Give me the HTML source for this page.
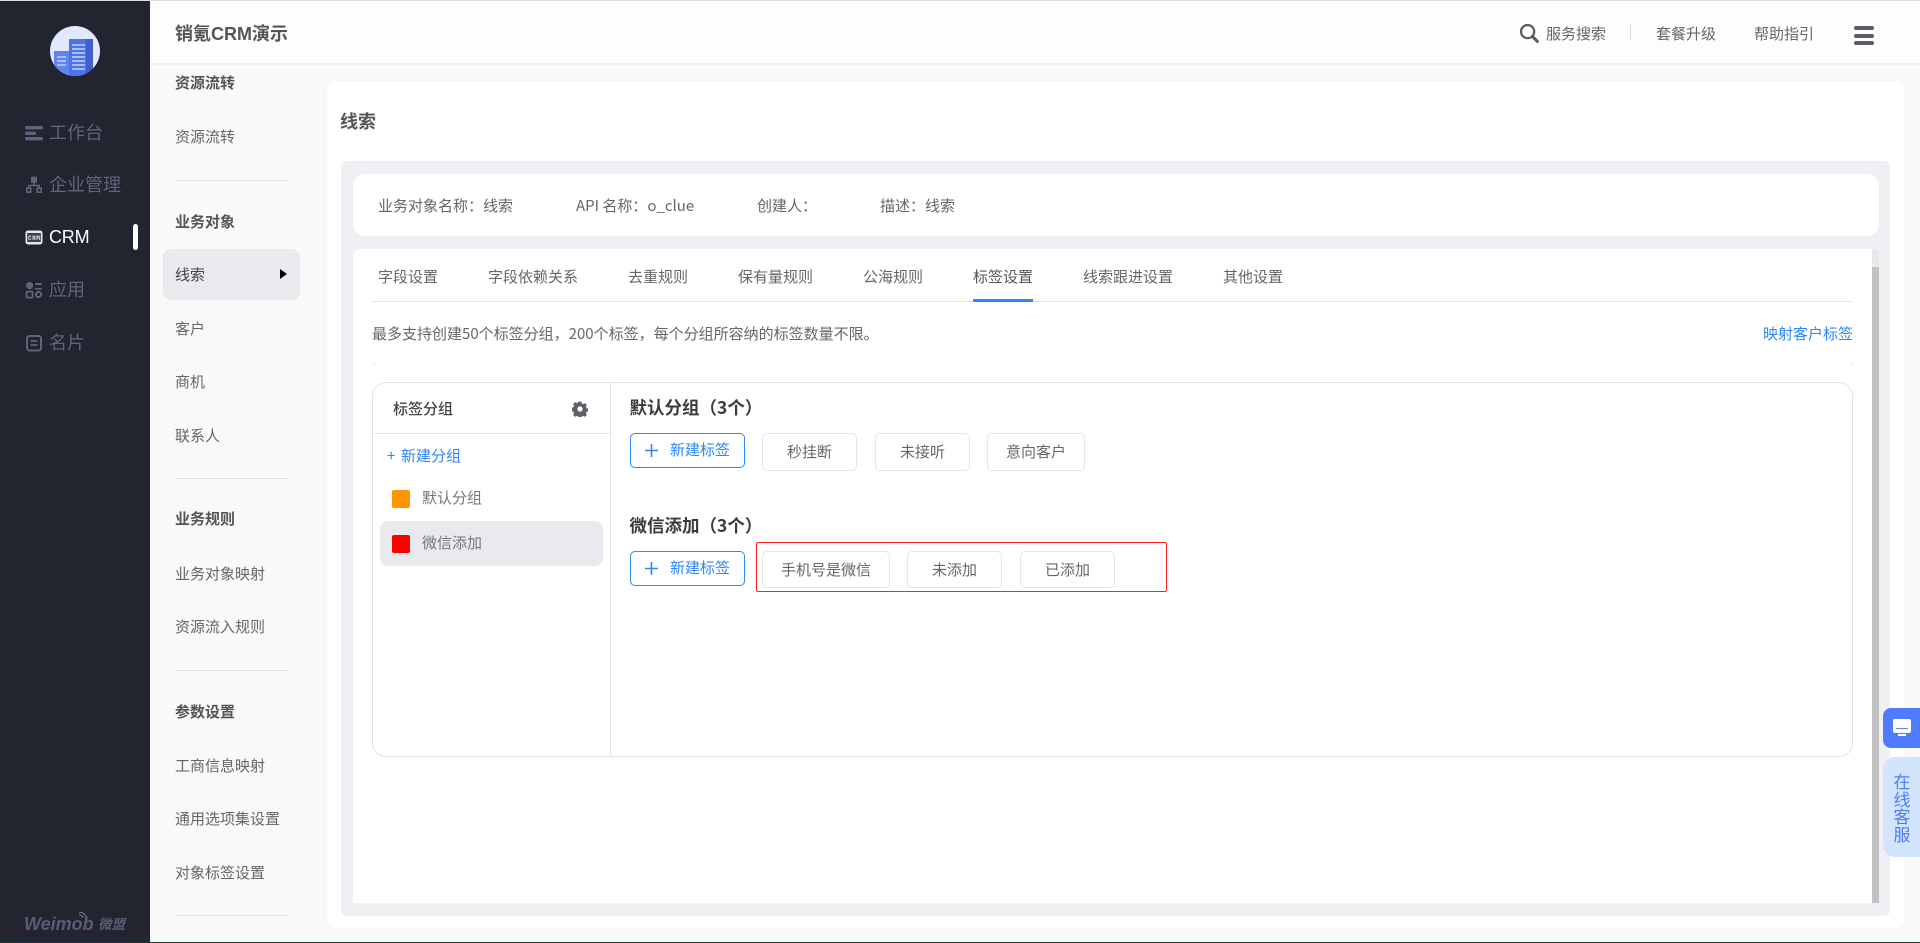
<!DOCTYPE html>
<html lang="zh-CN">
<head>
<meta charset="utf-8">
<title>销氪CRM演示</title>
<style>
html,body{margin:0;padding:0;width:1920px;height:943px;overflow:hidden;background:#f9f9fa}
body{position:relative;font-family:"Noto Sans CJK SC","Liberation Sans",sans-serif;font-size:15px;color:#666}
div,span,svg{position:absolute;box-sizing:border-box}
.t{white-space:nowrap;line-height:20px;height:20px}
.nav{font-size:18px;line-height:24px;height:24px;color:#61637b;left:49px;white-space:nowrap}
.b{font-weight:700;color:#555}
.hr{left:175px;width:113px;height:1px;background:#e3e3e5}
.h{font-size:17.5px;font-weight:700;color:#3a3a3f;left:629.5px;white-space:nowrap;line-height:24px;height:24px}
.btn{left:630px;width:115px;height:35px;border:1px solid #2d87f5;border-radius:5px;background:#fff}
.btn span{left:39px;top:6px;line-height:20px;color:#2d87f5;white-space:nowrap}
.tag{border:1px solid #e6e6e6;border-radius:5px;background:#fff;text-align:center;line-height:35px;color:#666;white-space:nowrap}
</style>
</head>
<body>
<div style="left:0;top:0;width:1920px;height:1px;background:#dcdce2"></div>
<div style="left:0;top:942px;width:1920px;height:1px;background:#23363d"></div>

<!-- dark sidebar -->
<div style="left:0;top:1px;width:150px;height:941px;background:#22242f"></div>
<svg style="left:50px;top:26px" width="50" height="50" viewBox="0 0 50 50">
<defs><clipPath id="c"><circle cx="25" cy="25" r="25"/></clipPath></defs>
<g clip-path="url(#c)">
<rect width="50" height="50" fill="#e0e7fe"/>
<rect x="19" y="13" width="24" height="37" fill="#4e72ea"/>
<rect x="36" y="13" width="7" height="37" fill="#3f5fd0"/>
<rect x="4" y="25" width="15" height="25" fill="#5f84f2"/>
<g fill="#a9bdf8">
<rect x="22" y="18" width="13" height="2"/><rect x="22" y="22" width="13" height="2"/><rect x="22" y="26" width="13" height="2"/><rect x="22" y="30" width="13" height="2"/><rect x="22" y="34" width="13" height="2"/><rect x="22" y="38" width="13" height="2"/><rect x="22" y="42" width="13" height="2"/>
<rect x="7" y="30" width="9" height="2"/><rect x="7" y="34" width="9" height="2"/><rect x="7" y="38" width="9" height="2"/>
</g>
</g>
</svg>

<svg style="left:25px;top:125px" width="18" height="16" viewBox="0 0 18 16" fill="#61637b">
<rect x="0" y="1" width="18" height="3.4" rx="1.5"/><rect x="0" y="6.6" width="11" height="3.4" rx="1.5"/><rect x="0" y="12" width="18" height="3.4" rx="1.5"/>
</svg>
<div class="nav" style="top:120px">工作台</div>

<svg style="left:25px;top:176px" width="18" height="18" viewBox="0 0 18 18" fill="none" stroke="#61637b" stroke-width="1.6">
<rect x="6.8" y="1.5" width="4.4" height="4.4" fill="#61637b"/>
<path d="M9 6v3.5M3.8 12V9.5h10.4V12"/>
<rect x="1.8" y="12.2" width="4" height="4"/><rect x="12.2" y="12.2" width="4" height="4"/>
</svg>
<div class="nav" style="top:172px">企业管理</div>

<svg style="left:25px;top:230px" width="18" height="15" viewBox="0 0 18 15">
<rect x="0.5" y="0.5" width="17" height="14" rx="2.5" fill="#e6e6ea"/>
<rect x="2.2" y="3" width="13.6" height="9" fill="#3c3e4a"/>
<text x="9" y="10.2" font-size="6.2" font-family="Liberation Mono,monospace" font-weight="700" text-anchor="middle" fill="#e6e6ea" textLength="12">CRM</text>
</svg>
<div class="nav" style="top:225px;color:#fff;font-family:'Liberation Sans',sans-serif;letter-spacing:-.2px">CRM</div>
<div style="left:133px;top:224px;width:5px;height:26px;background:#fff;border-radius:3px"></div>

<svg style="left:25px;top:281px" width="18" height="18" viewBox="0 0 18 18" fill="#61637b">
<circle cx="4.6" cy="4.6" r="3.6"/><rect x="10" y="2" width="7" height="2" rx="1"/>
<rect x="1.6" y="10.6" width="6" height="6" rx="1" fill="none" stroke="#61637b" stroke-width="1.8"/>
<circle cx="13.5" cy="13.5" r="2.6" fill="none" stroke="#61637b" stroke-width="2"/>
<rect x="10" y="7" width="7" height="1.6" rx=".8"/>
</svg>
<div class="nav" style="top:277px">应用</div>

<svg style="left:25px;top:334px" width="18" height="18" viewBox="0 0 18 18" fill="none" stroke="#61637b" stroke-width="2">
<rect x="2" y="2" width="14" height="14.5" rx="2.5"/><path d="M5.5 7h7M5.5 11h7" stroke-width="1.7"/>
</svg>
<div class="nav" style="top:330px">名片</div>

<div style="left:24px;top:912px;width:105px;height:24px;color:#5a5c75;font-family:'Liberation Sans',sans-serif;font-style:italic;font-weight:700;font-size:18px;line-height:24px;white-space:nowrap">Weimob</div>
<div style="left:98px;top:913px;font-size:13.5px;font-weight:700;font-style:italic;color:#5a5c75;line-height:20px;white-space:nowrap">微盟</div>
<svg style="left:78px;top:909px" width="10" height="10" viewBox="0 0 10 10" fill="none" stroke="#6a6c85" stroke-width="1.2">
<path d="M1 3.5a6 6 0 0 1 7 5M1 6a3.5 3.5 0 0 1 4 3"/>
</svg>

<!-- header -->
<div style="left:150px;top:1px;width:1770px;height:64px;background:#fdfdfd;border-bottom:2px solid #f1f1f3"></div>
<div class="t b" style="left:175px;top:22px;font-size:18px;line-height:22px;height:22px">销氪<span style="position:static;font-family:'Liberation Sans',sans-serif">CRM</span>演示</div>
<svg style="left:1519px;top:23px" width="20" height="20" viewBox="0 0 20 20" fill="none" stroke="#555a63" stroke-width="2.2">
<circle cx="8.6" cy="8.6" r="6.6"/><path d="M13.4 13.4L18.4 18.4" stroke-width="3" stroke-linecap="round"/>
</svg>
<div class="t" style="left:1546px;top:24px">服务搜索</div>
<div style="left:1630px;top:24px;width:1px;height:17px;background:#ddd"></div>
<div class="t" style="left:1656px;top:24px">套餐升级</div>
<div class="t" style="left:1754px;top:24px">帮助指引</div>
<div style="left:1854px;top:26px;width:20px;height:4px;border-radius:2px;background:#5c5c66"></div>
<div style="left:1854px;top:34px;width:20px;height:4px;border-radius:2px;background:#5c5c66"></div>
<div style="left:1854px;top:41px;width:20px;height:4px;border-radius:2px;background:#5c5c66"></div>

<!-- secondary nav -->
<div class="t b" style="left:175px;top:73px">资源流转</div>
<div class="t" style="left:175px;top:127px">资源流转</div>
<div class="hr" style="top:180px"></div>
<div class="t b" style="left:175px;top:212px">业务对象</div>
<div style="left:163px;top:249px;width:137px;height:51px;background:#e9e9ee;border-radius:8px"></div>
<div class="t" style="left:175px;top:265px;color:#444">线索</div>
<svg style="left:280px;top:269px" width="7" height="10" viewBox="0 0 7 10"><path d="M0 0L7 5L0 10Z" fill="#000"/></svg>
<div class="t" style="left:175px;top:319px">客户</div>
<div class="t" style="left:175px;top:372px">商机</div>
<div class="t" style="left:175px;top:426px">联系人</div>
<div class="hr" style="top:478px"></div>
<div class="t b" style="left:175px;top:509px">业务规则</div>
<div class="t" style="left:175px;top:564px">业务对象映射</div>
<div class="t" style="left:175px;top:617px">资源流入规则</div>
<div class="hr" style="top:670px"></div>
<div class="t b" style="left:175px;top:702px">参数设置</div>
<div class="t" style="left:175px;top:756px">工商信息映射</div>
<div class="t" style="left:175px;top:809px">通用选项集设置</div>
<div class="t" style="left:175px;top:863px">对象标签设置</div>
<div class="hr" style="top:915px"></div>

<!-- main card -->
<div style="left:327px;top:81px;width:1577px;height:847px;background:#fff;border-radius:8px;box-shadow:0 0 2px rgba(0,0,0,.03)"></div>
<div class="t b" style="left:340px;top:109px;font-size:18px;line-height:24px;height:24px">线索</div>
<div style="left:341px;top:161px;width:1549px;height:755px;background:#f0f0f4;border-radius:6px"></div>

<div style="left:353px;top:174px;width:1526px;height:62px;background:#fff;border-radius:12px"></div>
<div class="t" style="left:378px;top:196px">业务对象名称：线索</div>
<div class="t" style="left:576px;top:196px">API 名称：o_clue</div>
<div class="t" style="left:757px;top:196px">创建人：</div>
<div class="t" style="left:880px;top:196px">描述：线索</div>

<div style="left:353px;top:249px;width:1526px;height:654px;background:#fff;border-radius:6px 6px 0 0"></div>
<div style="left:1872px;top:249px;width:7px;height:18px;background:#e8e8e8;border-radius:0 5px 0 0"></div>
<div style="left:1872px;top:267px;width:7px;height:636px;background:#c2c2c2"></div>

<div class="t" style="left:378px;top:267px">字段设置</div>
<div class="t" style="left:488px;top:267px">字段依赖关系</div>
<div class="t" style="left:628px;top:267px">去重规则</div>
<div class="t" style="left:738px;top:267px">保有量规则</div>
<div class="t" style="left:863px;top:267px">公海规则</div>
<div class="t" style="left:973px;top:267px;color:#555">标签设置</div>
<div class="t" style="left:1083px;top:267px">线索跟进设置</div>
<div class="t" style="left:1223px;top:267px">其他设置</div>
<div style="left:372px;top:301px;width:1481px;height:1px;background:#e6e6e6"></div>
<div style="left:973px;top:299px;width:60px;height:3px;background:#2d87f5"></div>

<div class="t" style="left:372px;top:324px">最多支持创建50个标签分组，200个标签，每个分组所容纳的标签数量不限。</div>
<div class="t" style="left:1763px;top:324px;color:#2d87f5">映射客户标签</div>
<div style="left:372px;top:363px;width:4px;height:4px;background:linear-gradient(135deg,#efefef,#fff)"></div>
<div style="left:1849px;top:363px;width:4px;height:4px;background:linear-gradient(225deg,#efefef,#fff)"></div>

<!-- tag panel -->
<div style="left:372px;top:382px;width:1481px;height:375px;border:1px solid #e4e4e4;border-radius:14px;background:#fff"></div>
<div style="left:610px;top:383px;width:1px;height:373px;background:#e4e4e4"></div>
<div style="left:373px;top:433px;width:237px;height:1px;background:#e4e4e4"></div>
<div class="t" style="left:393px;top:399px;color:#444;font-weight:500">标签分组</div>
<svg style="left:572px;top:401px" width="16" height="16" viewBox="0 0 16 16">
<path fill="#5f5f66" fill-rule="evenodd" d="M6.6.5h2.8l.4 2 1.3.6 1.8-1 2 2-1 1.8.6 1.3 2 .4v2.8l-2 .4-.6 1.3 1 1.8-2 2-1.8-1-1.3.6-.4 2H6.6l-.4-2-1.3-.6-1.8 1-2-2 1-1.8-.6-1.3-2-.4V6.6l2-.4.6-1.3-1-1.8 2-2 1.8 1 1.3-.6zM8 5.4a2.6 2.6 0 1 0 0 5.2 2.6 2.6 0 0 0 0-5.2z"/>
</svg>
<div class="t" style="left:387px;top:446px;color:#2d87f5">+</div>
<div class="t" style="left:401px;top:446px;color:#2d87f5">新建分组</div>
<div style="left:392px;top:490px;width:18px;height:18px;background:#ff9500;border-radius:2px"></div>
<div class="t" style="left:422px;top:488px;color:#777">默认分组</div>
<div style="left:380px;top:521px;width:223px;height:45px;background:#e9e9ee;border-radius:8px"></div>
<div style="left:392px;top:535px;width:18px;height:18px;background:#f00;border-radius:2px"></div>
<div class="t" style="left:422px;top:533px;color:#777">微信添加</div>

<div class="h" style="top:396px">默认分组（3个）</div>
<div class="btn" style="top:433px"><svg style="left:13px;top:9px" width="15" height="15" viewBox="0 0 15 15"><path d="M7.5 1v13M1 7.5h13" stroke="#2d87f5" stroke-width="1.6" fill="none"/></svg><span>新建标签</span></div>
<div class="tag" style="left:762px;top:433px;width:95px;height:38px">秒挂断</div>
<div class="tag" style="left:875px;top:433px;width:95px;height:38px">未接听</div>
<div class="tag" style="left:987px;top:433px;width:98px;height:38px">意向客户</div>

<div class="h" style="top:514px">微信添加（3个）</div>
<div class="btn" style="top:551px"><svg style="left:13px;top:9px" width="15" height="15" viewBox="0 0 15 15"><path d="M7.5 1v13M1 7.5h13" stroke="#2d87f5" stroke-width="1.6" fill="none"/></svg><span>新建标签</span></div>
<div style="left:756px;top:542px;width:411px;height:50px;border:1px solid #f22;border-radius:2px"></div>
<div class="tag" style="left:762px;top:551px;width:128px;height:37px">手机号是微信</div>
<div class="tag" style="left:907px;top:551px;width:95px;height:37px">未添加</div>
<div class="tag" style="left:1020px;top:551px;width:95px;height:37px">已添加</div>

<!-- float -->
<div style="left:1883px;top:708px;width:37px;height:40px;background:#4f7cff;border-radius:8px 0 0 8px"></div>
<svg style="left:1892px;top:718px" width="20" height="20" viewBox="0 0 20 20">
<rect x="1" y="1" width="18" height="14" rx="2" fill="#fff"/>
<path d="M4 10.6h12" stroke="#4f7cff" stroke-width="1"/>
<rect x="6" y="16" width="8" height="2" fill="#fff"/>
</svg>
<div style="left:1883px;top:757px;width:37px;height:100px;background:#d3e5fd;border-radius:12px 0 0 12px"></div>
<div style="left:1893px;top:772px;width:18px;font-size:17px;line-height:17.5px;color:#4a7dff;white-space:normal;text-align:center">在线客服</div>
</body>
</html>
